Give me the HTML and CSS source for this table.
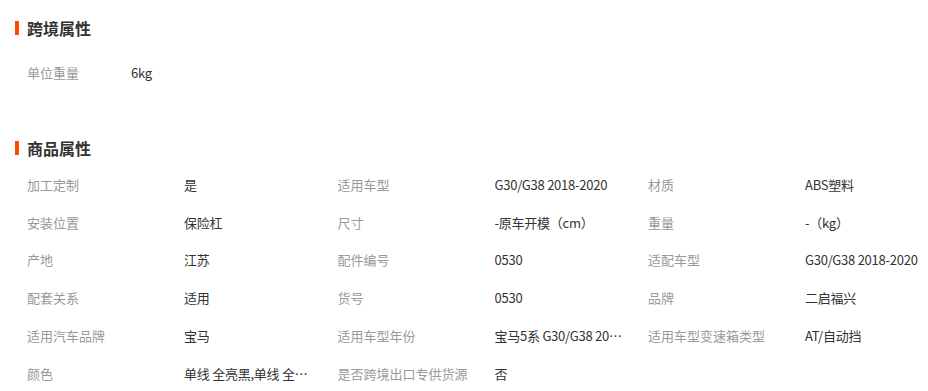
FILE: index.html
```html
<!DOCTYPE html>
<html lang="zh-CN">
<head>
<meta charset="utf-8">
<link rel="stylesheet" href="styles.css">
</head>
<body>
<div class="page">
  <section class="block block-cross">
    <h2 class="title">跨境属性</h2>
    <div class="grid grid-small">
      <div class="label">单位重量</div><div class="value">6kg</div>
    </div>
  </section>
  <section class="block block-goods">
    <h2 class="title">商品属性</h2>
    <div class="grid">
      <div class="label">加工定制</div><div class="value">是</div>
      <div class="label">适用车型</div><div class="value">G30/G38 2018-2020</div>
      <div class="label">材质</div><div class="value">ABS塑料</div>

      <div class="label">安装位置</div><div class="value">保险杠</div>
      <div class="label">尺寸</div><div class="value">-原车开模（cm）</div>
      <div class="label">重量</div><div class="value">-（kg）</div>

      <div class="label">产地</div><div class="value">江苏</div>
      <div class="label">配件编号</div><div class="value">0530</div>
      <div class="label">适配车型</div><div class="value">G30/G38 2018-2020</div>

      <div class="label">配套关系</div><div class="value">适用</div>
      <div class="label">货号</div><div class="value">0530</div>
      <div class="label">品牌</div><div class="value">二启福兴</div>

      <div class="label">适用汽车品牌</div><div class="value">宝马</div>
      <div class="label">适用车型年份</div><div class="value">宝马5系 G30/G38 2018-2020</div>
      <div class="label">适用车型变速箱类型</div><div class="value">AT/自动挡</div>

      <div class="label">颜色</div><div class="value">单线 全亮黑,单线 全亮黑,双线 全亮黑</div>
      <div class="label">是否跨境出口专供货源</div><div class="value">否</div>
    </div>
  </section>
</div>
</body>
</html>
```
FILE: styles.css
```css
html, body {
  margin: 0;
  padding: 0;
  background: #fff;
}
body {
  font-family: "Noto Sans CJK SC", "Noto Sans", sans-serif;
  color: #333;
  overflow: hidden;
}
.page {
  width: 928px;
  height: 391px;
  overflow: hidden;
}
.title {
  margin: 0;
  position: relative;
  padding-left: 27px;
  font-size: 16px;
  font-weight: bold;
  line-height: 22px;
  color: #333;
}
.title::before {
  content: "";
  position: absolute;
  left: 15px;
  top: 4px;
  width: 4px;
  height: 14px;
  background: #ff4a00;
}
.block-cross {
  padding-top: 17px;
}
.block-cross .grid {
  margin-top: 25px;
}
.block-goods {
  margin-top: 35px;
}
.block-goods .grid {
  margin-top: 17px;
}
.grid {
  display: grid;
  grid-template-columns: 157px 153.5px 157px 153.5px 157px 153.5px;
  grid-auto-rows: 37.75px;
  padding-left: 27px;
  font-size: 13px;
  line-height: 18px;
}
.grid-small {
  grid-template-columns: 104px 200px;
}
.label {
  color: #999;
  white-space: nowrap;
}
.value {
  color: #333;
  letter-spacing: -0.25px;
  max-width: 128px;
  white-space: nowrap;
  overflow: hidden;
  text-overflow: ellipsis;
}
```
